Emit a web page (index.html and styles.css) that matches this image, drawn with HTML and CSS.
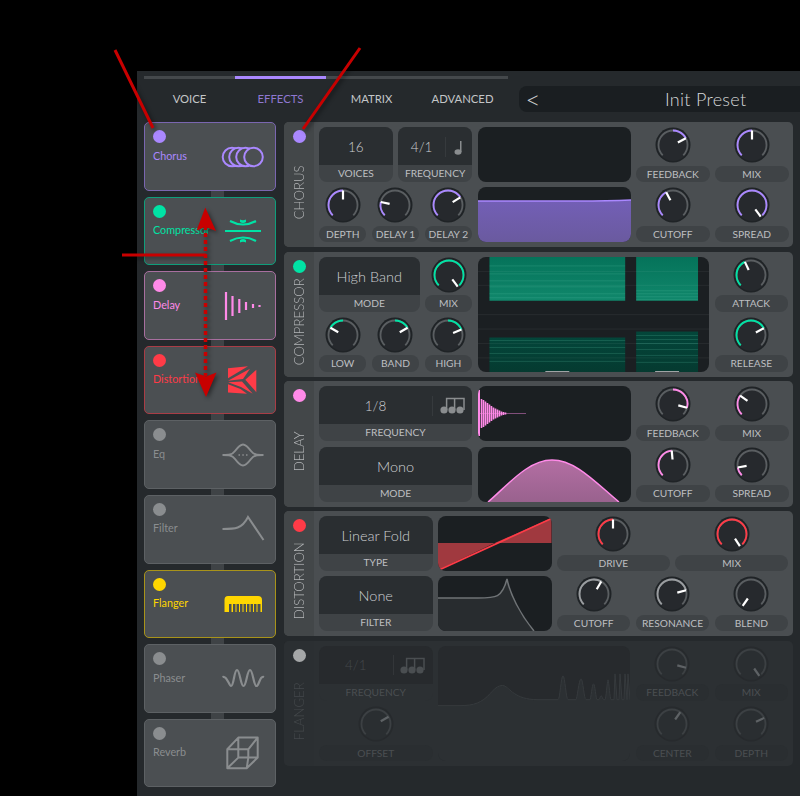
FILE: index.html
```html
<!DOCTYPE html>
<html>
<head>
  <title>Synth Effects</title>
  <link rel="stylesheet" href="styles.css">
</head>
<body>
  <svg class="defs">
    <symbol id="triplet" viewBox="0 0 26 17">
      <circle cx="4" cy="13" r="3.6"/>
      <circle cx="12" cy="13" r="3.6"/>
      <circle cx="20" cy="13" r="3.6"/>
      <path d="M6.6 13V1.5H24V13M14.6 13V1.5" fill="none" stroke="currentColor" stroke-width="1.5"/>
    </symbol>
  </svg>

  <div class="window">
    <div class="rail"><span class="rail-on"></span></div>
    <div class="header">
      <div class="tabs">
        <span class="tab">VOICE</span>
        <span class="tab tab-on">EFFECTS</span>
        <span class="tab">MATRIX</span>
        <span class="tab">ADVANCED</span>
      </div>
      <div class="preset">
        <span class="preset-prev">&lt;</span>
        <span class="preset-name">Init Preset</span>
      </div>
    </div>

    <div class="main">
      <div class="cards">
        <div class="card chorus">
          <span class="dot"></span>
          <div class="card-row">
            <span class="card-name">Chorus</span>
            <svg class="card-icon" viewBox="0 0 44 24" fill="#4b4f52" stroke="currentColor" stroke-width="2">
              <circle cx="11" cy="12" r="9.3"/><circle cx="17.5" cy="12" r="9.3"/><circle cx="24.5" cy="12" r="9.3"/><circle cx="32.5" cy="12" r="9.3"/>
            </svg>
          </div>
        </div>
        <i class="link"></i>
        <div class="card compressor">
          <span class="dot"></span>
          <div class="card-row">
            <span class="card-name">Compressor</span>
            <svg class="card-icon" viewBox="0 0 44 24" fill="none" stroke="currentColor" stroke-width="2">
              <path d="M4 12H40M9 2Q22 9 35 2M9 22Q22 15 35 22"/>
              <path d="M19 0.5Q22 2 25 0.5V3Q22 5 19 3ZM19 23.5Q22 22 25 23.5V21Q22 19 19 21Z" fill="currentColor" stroke="none"/>
            </svg>
          </div>
        </div>
        <i class="link"></i>
        <div class="card delay">
          <span class="dot"></span>
          <div class="card-row">
            <span class="card-name">Delay</span>
            <svg class="card-icon card-icon-tall" viewBox="0 0 44 30" fill="none" stroke="currentColor" stroke-width="2.2">
              <path d="M5 1V29M11.500 5V25M18.300 8V22M25 11V19M32 13V17M38.500 14V16"/>
            </svg>
          </div>
        </div>
        <i class="link"></i>
        <div class="card distortion">
          <span class="dot"></span>
          <div class="card-row">
            <span class="card-name">Distortion</span>
            <svg class="card-icon card-icon-tall" viewBox="0 0 44 30" fill="currentColor">
              <path d="M7 3.200L27 1.200L7 13.200Z"/>
              <path d="M7 15.800L29 3.800L22 14Z"/>
              <path d="M24.300 14.800L35.300 4.800V27.200Z"/>
              <path d="M7 17.200L21 16.500L31.700 28.800L20 22Z"/>
              <path d="M7 19.200L19.500 24L26 28.800L7 27.500Z"/>
            </svg>
          </div>
        </div>
        <i class="link"></i>
        <div class="card">
          <span class="dot"></span>
          <div class="card-row">
            <span class="card-name">Eq</span>
            <svg class="card-icon" viewBox="0 0 44 24" fill="none" stroke="currentColor" stroke-width="2">
              <path d="M1.500 12C8 12 11 12 14 8C17 4 19 1.500 22 1.500C25 1.500 27 4 30 8C33 12 36 12 42.500 12C36 12 33 12 30 16C27 20 25 22.500 22 22.500C19 22.500 17 20 14 16C11 12 8 12 1.500 12Z"/>
              <path d="M17.500 12H19M21.300 12H22.800M25 12H26.500" stroke-width="1.400"/>
            </svg>
          </div>
        </div>
        <i class="link"></i>
        <div class="card">
          <span class="dot"></span>
          <div class="card-row">
            <span class="card-name">Filter</span>
            <svg class="card-icon card-icon-tall" viewBox="0 0 44 30" fill="none" stroke="currentColor" stroke-width="2">
              <path d="M1.500 15C14 15 21 15 27 3L42.500 26"/>
            </svg>
          </div>
        </div>
        <i class="link"></i>
        <div class="card flanger">
          <span class="dot"></span>
          <div class="card-row">
            <span class="card-name">Flanger</span>
            <svg class="card-icon" viewBox="0 0 44 24" fill="currentColor">
              <path d="M7 4H37Q41 4 41 8V20H39.500V12H36.500V20H35.500V12H33V20H32V12H29.500V20H28.500V12H26V20H25V12H22.500V20H21.500V12H19V20H18V12H15.500V20H14.500V12H12V20H10.500V12H8V20H3.500V8Q3.500 4 7 4Z"/>
            </svg>
          </div>
        </div>
        <i class="link"></i>
        <div class="card">
          <span class="dot"></span>
          <div class="card-row">
            <span class="card-name">Phaser</span>
            <svg class="card-icon" viewBox="0 0 44 24" fill="none" stroke="currentColor" stroke-width="2.200">
              <path d="M1.500 10C6 8 8 19 10 19C13 19 13 3 16 3C19 3 19.500 19 22.500 19C25.500 19 26 3 29 3C32 3 32.500 19 35.500 19C38 19 39 8 43 10"/>
            </svg>
          </div>
        </div>
        <i class="link"></i>
        <div class="card">
          <span class="dot"></span>
          <div class="card-row">
            <span class="card-name">Reverb</span>
            <svg class="card-icon card-icon-cube" viewBox="0 0 44 36" fill="none" stroke="currentColor" stroke-width="2" stroke-linejoin="round">
              <path d="M17.300 2.600H36.700V22.600L25.700 33.300H6.300V14.300ZM17.300 14.300H27.300V22.600H17.300ZM17.300 2.600V14.300M6.300 14.300H17.300M36.700 2.600L27.300 14.300M36.700 22.600H27.300M25.700 33.300L27.300 22.600M6.300 33.300L17.300 22.600"/>
            </svg>
          </div>
        </div>
      </div>

      <div class="panels">
        <div class="panel chorus">
          <div class="panel-side"><span class="dot"></span><span class="panel-name">CHORUS</span></div>
          <div class="panel-body grid-chorus">
            <div class="row">
              <div class="select"><div class="select-value">16</div><div class="select-label">VOICES</div></div>
              <div class="select">
                <div class="select-value"><span class="select-text">4/1</span><span class="select-mode">
                  <svg class="note" viewBox="0 0 10 16"><ellipse cx="4" cy="13" rx="3.500" ry="2.800"/><rect x="6" y="2" width="1.500" height="11"/></svg>
                </span></div>
                <div class="select-label">FREQUENCY</div>
              </div>
            </div>
            <div class="scope"></div>
            <div class="ctl">
              <svg class="knob" viewBox="0 0 36 36"><circle class="knob-rim" cx="18" cy="18" r="17.500"/><circle class="knob-face" cx="18" cy="18" r="16"/><circle class="knob-track" cx="18" cy="18" r="14.500" pathLength="360" stroke-dasharray="270 90" transform="rotate(135 18 18)"/><circle class="knob-arc" cx="18" cy="18" r="14.500" pathLength="360" stroke-dasharray="0 135 62 1000" transform="rotate(135 18 18)"/><line class="knob-ptr" x1="18" y1="12.500" x2="18" y2="3.500" transform="rotate(62 18 18)"/></svg>
              <span class="pill">FEEDBACK</span>
            </div>
            <div class="ctl">
              <svg class="knob" viewBox="0 0 36 36"><circle class="knob-rim" cx="18" cy="18" r="17.500"/><circle class="knob-face" cx="18" cy="18" r="16"/><circle class="knob-track" cx="18" cy="18" r="14.500" pathLength="360" stroke-dasharray="270 90" transform="rotate(135 18 18)"/><circle class="knob-arc" cx="18" cy="18" r="14.500" pathLength="360" stroke-dasharray="135 1000" transform="rotate(135 18 18)"/><line class="knob-ptr" x1="18" y1="12.500" x2="18" y2="3.500"/></svg>
              <span class="pill">MIX</span>
            </div>
            <div class="row">
              <div class="ctl">
                <svg class="knob" viewBox="0 0 36 36"><circle class="knob-rim" cx="18" cy="18" r="17.500"/><circle class="knob-face" cx="18" cy="18" r="16"/><circle class="knob-track" cx="18" cy="18" r="14.500" pathLength="360" stroke-dasharray="270 90" transform="rotate(135 18 18)"/><circle class="knob-arc" cx="18" cy="18" r="14.500" pathLength="360" stroke-dasharray="135 1000" transform="rotate(135 18 18)"/><line class="knob-ptr" x1="18" y1="12.500" x2="18" y2="3.500"/></svg>
                <span class="pill">DEPTH</span>
              </div>
              <div class="ctl">
                <svg class="knob" viewBox="0 0 36 36"><circle class="knob-rim" cx="18" cy="18" r="17.500"/><circle class="knob-face" cx="18" cy="18" r="16"/><circle class="knob-track" cx="18" cy="18" r="14.500" pathLength="360" stroke-dasharray="270 90" transform="rotate(135 18 18)"/><circle class="knob-arc" cx="18" cy="18" r="14.500" pathLength="360" stroke-dasharray="57 1000" transform="rotate(135 18 18)"/><line class="knob-ptr" x1="18" y1="12.500" x2="18" y2="3.500" transform="rotate(-78 18 18)"/></svg>
                <span class="pill">DELAY 1</span>
              </div>
              <div class="ctl">
                <svg class="knob" viewBox="0 0 36 36"><circle class="knob-rim" cx="18" cy="18" r="17.500"/><circle class="knob-face" cx="18" cy="18" r="16"/><circle class="knob-track" cx="18" cy="18" r="14.500" pathLength="360" stroke-dasharray="270 90" transform="rotate(135 18 18)"/><circle class="knob-arc" cx="18" cy="18" r="14.500" pathLength="360" stroke-dasharray="193 1000" transform="rotate(135 18 18)"/><line class="knob-ptr" x1="18" y1="12.500" x2="18" y2="3.500" transform="rotate(58 18 18)"/></svg>
                <span class="pill">DELAY 2</span>
              </div>
            </div>
            <div class="scope">
              <svg class="scope-svg" viewBox="0 0 153 55" preserveAspectRatio="none">
                <defs><linearGradient id="chorusFill" x1="0" y1="0" x2="0" y2="1"><stop offset="0" stop-color="#735fb6"/><stop offset="1" stop-color="#6a5a9f"/></linearGradient></defs>
                <path d="M0 14H100Q130 14 153 13V55H0Z" fill="url(#chorusFill)"/>
                <path d="M0 14H100Q130 14 153 13" fill="none" stroke="#aa88ff" stroke-width="1.600"/>
              </svg>
            </div>
            <div class="ctl">
              <svg class="knob" viewBox="0 0 36 36"><circle class="knob-rim" cx="18" cy="18" r="17.500"/><circle class="knob-face" cx="18" cy="18" r="16"/><circle class="knob-track" cx="18" cy="18" r="14.500" pathLength="360" stroke-dasharray="270 90" transform="rotate(135 18 18)"/><circle class="knob-arc" cx="18" cy="18" r="14.500" pathLength="360" stroke-dasharray="107 1000" transform="rotate(135 18 18)"/><line class="knob-ptr" x1="18" y1="12.500" x2="18" y2="3.500" transform="rotate(-28 18 18)"/></svg>
              <span class="pill">CUTOFF</span>
            </div>
            <div class="ctl">
              <svg class="knob" viewBox="0 0 36 36"><circle class="knob-rim" cx="18" cy="18" r="17.500"/><circle class="knob-face" cx="18" cy="18" r="16"/><circle class="knob-track" cx="18" cy="18" r="14.500" pathLength="360" stroke-dasharray="270 90" transform="rotate(135 18 18)"/><circle class="knob-arc" cx="18" cy="18" r="14.500" pathLength="360" stroke-dasharray="270 1000" transform="rotate(135 18 18)"/><line class="knob-ptr" x1="18" y1="12.500" x2="18" y2="3.500" transform="rotate(143 18 18)"/></svg>
              <span class="pill">SPREAD</span>
            </div>
          </div>
        </div>

        <div class="panel compressor">
          <div class="panel-side"><span class="dot"></span><span class="panel-name">COMPRESSOR</span></div>
          <div class="panel-body grid-compressor">
            <div class="row">
              <div class="select select-wide"><div class="select-value select-big">High Band</div><div class="select-label">MODE</div></div>
              <div class="ctl ctl-narrow">
                <svg class="knob" viewBox="0 0 36 36"><circle class="knob-rim" cx="18" cy="18" r="17.500"/><circle class="knob-face" cx="18" cy="18" r="16"/><circle class="knob-track" cx="18" cy="18" r="14.500" pathLength="360" stroke-dasharray="270 90" transform="rotate(135 18 18)"/><circle class="knob-arc" cx="18" cy="18" r="14.500" pathLength="360" stroke-dasharray="270 1000" transform="rotate(135 18 18)"/><line class="knob-ptr" x1="18" y1="12.500" x2="18" y2="3.500" transform="rotate(143 18 18)"/></svg>
                <span class="pill">MIX</span>
              </div>
            </div>
            <div class="scope scope-tall">
              <svg class="scope-svg" viewBox="0 0 232 116" preserveAspectRatio="none">
                <defs>
                  <linearGradient id="compTop" x1="0" y1="0" x2="0" y2="1"><stop offset="0" stop-color="#05735a"/><stop offset="1" stop-color="#10876b"/></linearGradient>
                  <linearGradient id="compLow" x1="0" y1="0" x2="0" y2="1"><stop offset="0" stop-color="#03463a"/><stop offset="1" stop-color="#053a30"/></linearGradient>
                </defs>
                <rect x="11.500" width="136" height="44" fill="url(#compTop)"/>
                <rect x="158.500" width="62" height="44" fill="url(#compTop)"/>
                <rect x="11.500" y="81" width="136" height="35" fill="url(#compLow)"/>
                <rect x="158.500" y="75" width="62" height="41" fill="url(#compLow)"/>
                <path d="M0 14.500H232M0 28.500H232M0 58H232M0 72.500H232M0 87H232M0 101.500H232" stroke="#fff" stroke-opacity=".06"/>
                <path d="M11.500 9H147.500M11.500 17H147.500M11.500 24H147.500M11.500 30H147.500M11.500 37H147.500M11.500 41H147.500M158.500 34H220.500M158.500 37H220.500M158.500 40H220.500M158.500 43H220.500" stroke="#5fc3a9" stroke-opacity=".22"/>
                <path d="M11.500 84H147.500M11.500 91H147.500M11.500 97H147.500M11.500 105H147.500M158.500 79H220.500M158.500 83H220.500M158.500 87H220.500M158.500 93H220.500M158.500 99H220.500M158.500 106H220.500" stroke="#5fc3a9" stroke-opacity=".22"/>
                <path d="M67.500 115.500H91.500M177.500 115.500H201.500" stroke="#9fa3a5" stroke-width="1.500"/>
              </svg>
            </div>
            <div class="ctl">
              <svg class="knob" viewBox="0 0 36 36"><circle class="knob-rim" cx="18" cy="18" r="17.500"/><circle class="knob-face" cx="18" cy="18" r="16"/><circle class="knob-track" cx="18" cy="18" r="14.500" pathLength="360" stroke-dasharray="270 90" transform="rotate(135 18 18)"/><circle class="knob-arc" cx="18" cy="18" r="14.500" pathLength="360" stroke-dasharray="110 1000" transform="rotate(135 18 18)"/><line class="knob-ptr" x1="18" y1="12.500" x2="18" y2="3.500" transform="rotate(-25 18 18)"/></svg>
              <span class="pill">ATTACK</span>
            </div>
            <div class="row">
              <div class="ctl">
                <svg class="knob" viewBox="0 0 36 36"><circle class="knob-rim" cx="18" cy="18" r="17.500"/><circle class="knob-face" cx="18" cy="18" r="16"/><circle class="knob-track" cx="18" cy="18" r="14.500" pathLength="360" stroke-dasharray="270 90" transform="rotate(135 18 18)"/><circle class="knob-arc" cx="18" cy="18" r="14.500" pathLength="360" stroke-dasharray="0 75 60 1000" transform="rotate(135 18 18)"/><line class="knob-ptr" x1="18" y1="12.500" x2="18" y2="3.500" transform="rotate(-60 18 18)"/></svg>
                <span class="pill">LOW</span>
              </div>
              <div class="ctl">
                <svg class="knob" viewBox="0 0 36 36"><circle class="knob-rim" cx="18" cy="18" r="17.500"/><circle class="knob-face" cx="18" cy="18" r="16"/><circle class="knob-track" cx="18" cy="18" r="14.500" pathLength="360" stroke-dasharray="270 90" transform="rotate(135 18 18)"/><circle class="knob-arc" cx="18" cy="18" r="14.500" pathLength="360" stroke-dasharray="0 135 60 1000" transform="rotate(135 18 18)"/><line class="knob-ptr" x1="18" y1="12.500" x2="18" y2="3.500" transform="rotate(60 18 18)"/></svg>
                <span class="pill">BAND</span>
              </div>
              <div class="ctl">
                <svg class="knob" viewBox="0 0 36 36"><circle class="knob-rim" cx="18" cy="18" r="17.500"/><circle class="knob-face" cx="18" cy="18" r="16"/><circle class="knob-track" cx="18" cy="18" r="14.500" pathLength="360" stroke-dasharray="270 90" transform="rotate(135 18 18)"/><circle class="knob-arc" cx="18" cy="18" r="14.500" pathLength="360" stroke-dasharray="0 135 68 1000" transform="rotate(135 18 18)"/><line class="knob-ptr" x1="18" y1="12.500" x2="18" y2="3.500" transform="rotate(68 18 18)"/></svg>
                <span class="pill">HIGH</span>
              </div>
            </div>
            <div class="ctl">
              <svg class="knob" viewBox="0 0 36 36"><circle class="knob-rim" cx="18" cy="18" r="17.500"/><circle class="knob-face" cx="18" cy="18" r="16"/><circle class="knob-track" cx="18" cy="18" r="14.500" pathLength="360" stroke-dasharray="270 90" transform="rotate(135 18 18)"/><circle class="knob-arc" cx="18" cy="18" r="14.500" pathLength="360" stroke-dasharray="197 1000" transform="rotate(135 18 18)"/><line class="knob-ptr" x1="18" y1="12.500" x2="18" y2="3.500" transform="rotate(62 18 18)"/></svg>
              <span class="pill">RELEASE</span>
            </div>
          </div>
        </div>

        <div class="panel delay">
          <div class="panel-side"><span class="dot"></span><span class="panel-name">DELAY</span></div>
          <div class="panel-body grid-chorus">
            <div class="select select-full">
              <div class="select-value"><span class="select-text">1/8</span><span class="select-mode select-mode-wide">
                <svg class="triplet"><use href="#triplet"/></svg>
              </span></div>
              <div class="select-label">FREQUENCY</div>
            </div>
            <div class="scope">
              <svg class="scope-svg" viewBox="0 0 153 55" preserveAspectRatio="none">
                <path d="M0.500 27.500H48" stroke="#ff8ae8" stroke-opacity=".45"/>
                <path d="M1 4V50" stroke="#ff8ae8" stroke-width="2"/>
                <path d="M3.500 13V42M5.500 14V41M7.500 15.500V39.500M9.500 17V38M11.500 18.500V36.500M13.500 20V35M15.500 21.500V33.500M17.500 22.500V32.500M19.500 23.500V31.500M21.500 24.500V30.500M23.500 25.500V29.500M25.500 26V29M27.500 26.500V28.500" stroke="#ff8ae8" stroke-width="1.600"/>
              </svg>
            </div>
            <div class="ctl">
              <svg class="knob" viewBox="0 0 36 36"><circle class="knob-rim" cx="18" cy="18" r="17.500"/><circle class="knob-face" cx="18" cy="18" r="16"/><circle class="knob-track" cx="18" cy="18" r="14.500" pathLength="360" stroke-dasharray="270 90" transform="rotate(135 18 18)"/><circle class="knob-arc" cx="18" cy="18" r="14.500" pathLength="360" stroke-dasharray="0 135 105 1000" transform="rotate(135 18 18)"/><line class="knob-ptr" x1="18" y1="12.500" x2="18" y2="3.500" transform="rotate(105 18 18)"/></svg>
              <span class="pill">FEEDBACK</span>
            </div>
            <div class="ctl">
              <svg class="knob" viewBox="0 0 36 36"><circle class="knob-rim" cx="18" cy="18" r="17.500"/><circle class="knob-face" cx="18" cy="18" r="16"/><circle class="knob-track" cx="18" cy="18" r="14.500" pathLength="360" stroke-dasharray="270 90" transform="rotate(135 18 18)"/><circle class="knob-arc" cx="18" cy="18" r="14.500" pathLength="360" stroke-dasharray="80 1000" transform="rotate(135 18 18)"/><line class="knob-ptr" x1="18" y1="12.500" x2="18" y2="3.500" transform="rotate(-55 18 18)"/></svg>
              <span class="pill">MIX</span>
            </div>
            <div class="select select-full"><div class="select-value select-big">Mono</div><div class="select-label">MODE</div></div>
            <div class="scope">
              <svg class="scope-svg" viewBox="0 0 153 55" preserveAspectRatio="none">
                <defs><linearGradient id="delayFill" x1="0" y1="0" x2="0" y2="1"><stop offset="0" stop-color="#b36ea3"/><stop offset="1" stop-color="#99628e"/></linearGradient></defs>
                <path d="M10 55C30 38 50 13 74 13C98 13 118 36 141 55Z" fill="url(#delayFill)"/>
                <path d="M10 55C30 38 50 13 74 13C98 13 118 36 141 55" fill="none" stroke="#ff8ae8" stroke-width="1.500"/>
              </svg>
            </div>
            <div class="ctl">
              <svg class="knob" viewBox="0 0 36 36"><circle class="knob-rim" cx="18" cy="18" r="17.500"/><circle class="knob-face" cx="18" cy="18" r="16"/><circle class="knob-track" cx="18" cy="18" r="14.500" pathLength="360" stroke-dasharray="270 90" transform="rotate(135 18 18)"/><circle class="knob-arc" cx="18" cy="18" r="14.500" pathLength="360" stroke-dasharray="130 1000" transform="rotate(135 18 18)"/><line class="knob-ptr" x1="18" y1="12.500" x2="18" y2="3.500" transform="rotate(-5 18 18)"/></svg>
              <span class="pill">CUTOFF</span>
            </div>
            <div class="ctl">
              <svg class="knob" viewBox="0 0 36 36"><circle class="knob-rim" cx="18" cy="18" r="17.500"/><circle class="knob-face" cx="18" cy="18" r="16"/><circle class="knob-track" cx="18" cy="18" r="14.500" pathLength="360" stroke-dasharray="270 90" transform="rotate(135 18 18)"/><circle class="knob-arc" cx="18" cy="18" r="14.500" pathLength="360" stroke-dasharray="35 1000" transform="rotate(135 18 18)"/><line class="knob-ptr" x1="18" y1="12.500" x2="18" y2="3.500" transform="rotate(-100 18 18)"/></svg>
              <span class="pill">SPREAD</span>
            </div>
          </div>
        </div>

        <div class="panel distortion">
          <div class="panel-side"><span class="dot"></span><span class="panel-name">DISTORTION</span></div>
          <div class="panel-body grid-distortion">
            <div class="select select-full"><div class="select-value select-big">Linear Fold</div><div class="select-label">TYPE</div></div>
            <div class="scope">
              <svg class="scope-svg" viewBox="0 0 113.500 55" preserveAspectRatio="none">
                <path d="M0 27H56.700L0 54ZM56.700 27L113.500 2V27Z" fill="#a0393f"/>
                <path d="M1 54L113.500 2.500" fill="none" stroke="#ff3b47" stroke-width="1.600"/>
              </svg>
            </div>
            <div class="row row-knobs">
              <div class="ctl">
                <svg class="knob" viewBox="0 0 36 36"><circle class="knob-rim" cx="18" cy="18" r="17.500"/><circle class="knob-face" cx="18" cy="18" r="16"/><circle class="knob-track" cx="18" cy="18" r="14.500" pathLength="360" stroke-dasharray="270 90" transform="rotate(135 18 18)"/><circle class="knob-arc" cx="18" cy="18" r="14.500" pathLength="360" stroke-dasharray="135 1000" transform="rotate(135 18 18)"/><line class="knob-ptr" x1="18" y1="12.500" x2="18" y2="3.500"/></svg>
                <span class="pill">DRIVE</span>
              </div>
              <div class="ctl">
                <svg class="knob" viewBox="0 0 36 36"><circle class="knob-rim" cx="18" cy="18" r="17.500"/><circle class="knob-face" cx="18" cy="18" r="16"/><circle class="knob-track" cx="18" cy="18" r="14.500" pathLength="360" stroke-dasharray="270 90" transform="rotate(135 18 18)"/><circle class="knob-arc" cx="18" cy="18" r="14.500" pathLength="360" stroke-dasharray="270 1000" transform="rotate(135 18 18)"/><line class="knob-ptr" x1="18" y1="12.500" x2="18" y2="3.500" transform="rotate(147 18 18)"/></svg>
                <span class="pill">MIX</span>
              </div>
            </div>
            <div class="select select-full"><div class="select-value select-big">None</div><div class="select-label">FILTER</div></div>
            <div class="scope">
              <svg class="scope-svg" viewBox="0 0 113.500 55" preserveAspectRatio="none">
                <path d="M0 22H40C58 22 64 22 69 3C72 18 82 38 96 55H0Z" fill="#282c2f"/>
                <path d="M0 22H40C58 22 64 22 69 3C72 18 82 38 96 55" fill="none" stroke="#6f7376" stroke-width="1.500"/>
              </svg>
            </div>
            <div class="row row-knobs">
              <div class="ctl ctl-grey">
                <svg class="knob" viewBox="0 0 36 36"><circle class="knob-rim" cx="18" cy="18" r="17.500"/><circle class="knob-face" cx="18" cy="18" r="16"/><circle class="knob-track" cx="18" cy="18" r="14.500" pathLength="360" stroke-dasharray="270 90" transform="rotate(135 18 18)"/><circle class="knob-arc" cx="18" cy="18" r="14.500" pathLength="360" stroke-dasharray="165 1000" transform="rotate(135 18 18)"/><line class="knob-ptr" x1="18" y1="12.500" x2="18" y2="3.500" transform="rotate(30 18 18)"/></svg>
                <span class="pill">CUTOFF</span>
              </div>
              <div class="ctl ctl-grey">
                <svg class="knob" viewBox="0 0 36 36"><circle class="knob-rim" cx="18" cy="18" r="17.500"/><circle class="knob-face" cx="18" cy="18" r="16"/><circle class="knob-track" cx="18" cy="18" r="14.500" pathLength="360" stroke-dasharray="270 90" transform="rotate(135 18 18)"/><circle class="knob-arc" cx="18" cy="18" r="14.500" pathLength="360" stroke-dasharray="210 1000" transform="rotate(135 18 18)"/><line class="knob-ptr" x1="18" y1="12.500" x2="18" y2="3.500" transform="rotate(75 18 18)"/></svg>
                <span class="pill">RESONANCE</span>
              </div>
              <div class="ctl ctl-grey">
                <svg class="knob" viewBox="0 0 36 36"><circle class="knob-rim" cx="18" cy="18" r="17.500"/><circle class="knob-face" cx="18" cy="18" r="16"/><circle class="knob-track" cx="18" cy="18" r="14.500" pathLength="360" stroke-dasharray="270 90" transform="rotate(135 18 18)"/><line class="knob-ptr" x1="18" y1="12.500" x2="18" y2="3.500" transform="rotate(-145 18 18)"/></svg>
                <span class="pill">BLEND</span>
              </div>
            </div>
          </div>
        </div>

        <div class="panel panel-off">
          <div class="panel-side"><span class="dot"></span><span class="panel-name">FLANGER</span></div>
          <div class="panel-body grid-flanger">
            <div class="select select-full">
              <div class="select-value"><span class="select-text">4/1</span><span class="select-mode select-mode-wide">
                <svg class="triplet"><use href="#triplet"/></svg>
              </span></div>
              <div class="select-label">FREQUENCY</div>
            </div>
            <div class="scope scope-tall">
              <svg class="scope-svg" viewBox="0 0 192 116" preserveAspectRatio="none">
                <path d="M0 60H22C36 60 44 57 52 48C58 41 62 39 66 40C72 42 76 54 100 54H120C122 54 123 30 125 30C127 30 128 54 130 54H138C139 54 141 33 143 33C145 33 146 54 148 54H152C153 54 154 38 155.500 38C157 38 158 54 159 54H161C162 54 162 50 163 50C164 50 165 54 165.500 54H167C168 54 169 36 170 34C171 36 172 54 173 54H176L177 28L179 54H181L182 28L184 54H186L187 28L189 54L190 28L192 54V116H0Z" fill="#2c3033"/>
                <path d="M0 60H22C36 60 44 57 52 48C58 41 62 39 66 40C72 42 76 54 100 54H120C122 54 123 30 125 30C127 30 128 54 130 54H138C139 54 141 33 143 33C145 33 146 54 148 54H152C153 54 154 38 155.500 38C157 38 158 54 159 54H161C162 54 162 50 163 50C164 50 165 54 165.500 54H167C168 54 169 36 170 34C171 36 172 54 173 54H176L177 28L179 54H181L182 28L184 54H186L187 28L189 54L190 28L192 54" fill="none" stroke="#363a3d"/>
              </svg>
            </div>
            <div class="ctl">
              <svg class="knob" viewBox="0 0 36 36"><circle class="knob-rim" cx="18" cy="18" r="17.500"/><circle class="knob-face" cx="18" cy="18" r="16"/><circle class="knob-track" cx="18" cy="18" r="14.500" pathLength="360" stroke-dasharray="270 90" transform="rotate(135 18 18)"/><line class="knob-ptr" x1="18" y1="12.500" x2="18" y2="3.500" transform="rotate(105 18 18)"/></svg>
              <span class="pill">FEEDBACK</span>
            </div>
            <div class="ctl">
              <svg class="knob" viewBox="0 0 36 36"><circle class="knob-rim" cx="18" cy="18" r="17.500"/><circle class="knob-face" cx="18" cy="18" r="16"/><circle class="knob-track" cx="18" cy="18" r="14.500" pathLength="360" stroke-dasharray="270 90" transform="rotate(135 18 18)"/><line class="knob-ptr" x1="18" y1="12.500" x2="18" y2="3.500" transform="rotate(145 18 18)"/></svg>
              <span class="pill">MIX</span>
            </div>
            <div class="ctl">
              <svg class="knob" viewBox="0 0 36 36"><circle class="knob-rim" cx="18" cy="18" r="17.500"/><circle class="knob-face" cx="18" cy="18" r="16"/><circle class="knob-track" cx="18" cy="18" r="14.500" pathLength="360" stroke-dasharray="270 90" transform="rotate(135 18 18)"/><line class="knob-ptr" x1="18" y1="12.500" x2="18" y2="3.500" transform="rotate(60 18 18)"/></svg>
              <span class="pill">OFFSET</span>
            </div>
            <div class="ctl">
              <svg class="knob" viewBox="0 0 36 36"><circle class="knob-rim" cx="18" cy="18" r="17.500"/><circle class="knob-face" cx="18" cy="18" r="16"/><circle class="knob-track" cx="18" cy="18" r="14.500" pathLength="360" stroke-dasharray="270 90" transform="rotate(135 18 18)"/><line class="knob-ptr" x1="18" y1="12.500" x2="18" y2="3.500" transform="rotate(35 18 18)"/></svg>
              <span class="pill">CENTER</span>
            </div>
            <div class="ctl">
              <svg class="knob" viewBox="0 0 36 36"><circle class="knob-rim" cx="18" cy="18" r="17.500"/><circle class="knob-face" cx="18" cy="18" r="16"/><circle class="knob-track" cx="18" cy="18" r="14.500" pathLength="360" stroke-dasharray="270 90" transform="rotate(135 18 18)"/><line class="knob-ptr" x1="18" y1="12.500" x2="18" y2="3.500" transform="rotate(65 18 18)"/></svg>
              <span class="pill">DEPTH</span>
            </div>
          </div>
        </div>
      </div>
    </div>
  </div>

  <!-- red annotation marks drawn over the screenshot -->
  <svg class="marks" viewBox="0 0 800 796">
    <path d="M115 50L153 128M360 48L303 129M122 255H206" fill="none" stroke="#c80000" stroke-width="3"/>
    <path d="M205.500 226V376" fill="none" stroke="#c80000" stroke-width="3.500" stroke-dasharray="4 3"/>
    <path d="M205.300 207.500L196.500 230.500L205.300 227L216 231Z" fill="#c80000"/>
    <path d="M206 397L195 372.500L206 376.500L216.500 372.500Z" fill="#c80000"/>
  </svg>
</body>
</html>
```

FILE: styles.css
```css
html, body {
  margin: 0;
  height: 796px;
  overflow: hidden;
  background-color: #000;
}
body {
  font-family: "Lato", "Open Sans", sans-serif;
  position: relative;
}
.defs {
  display: none;
}

/* window */
.window {
  margin: 71px 0 0 137px;
  width: 663px;
  height: 725px;
  padding-top: 5px;
  box-sizing: border-box;
  background-color: #25292c;
  overflow: hidden;
}
.rail {
  width: 364px;
  height: 3px;
  margin-left: 7px;
  background-color: #44484b;
}
.rail-on {
  display: block;
  width: 91px;
  height: 3px;
  margin-left: 91px;
  background-color: #aa88ff;
}
.header {
  display: flex;
  margin: 7px 0 10px 7px;
  height: 26px;
}
.tabs {
  display: flex;
  width: 364px;
}
.tab {
  flex: 1;
  text-align: center;
  line-height: 26px;
  font-size: 11.3px;
  color: #c4c6c8;
}
.tab-on {
  color: #8f78d2;
}
.preset {
  display: flex;
  align-items: center;
  flex: 1;
  margin-left: 11px;
  background-color: #1a1e21;
  border-radius: 8px 0 0 8px;
}
.preset-prev {
  width: 28px;
  text-align: center;
  font-size: 26px;
  line-height: 26px;
  font-weight: 300;
  color: #c9cbcc;
}
.preset-name {
  flex: 1;
  padding-left: 118px;
  box-sizing: border-box;
  font-size: 18px;
  font-weight: 300;
  letter-spacing: .3px;
  color: #d6d8d9;
}

.main {
  display: flex;
  gap: 8px;
  padding-left: 7px;
}

/* effect cards */
.chorus { --accent: #aa88ff; --edge: #7a66b0; }
.compressor { --accent: #00e3a5; --edge: #0f9e7b; }
.delay { --accent: #ff8ae8; --edge: #a86f9f; }
.distortion { --accent: #ff3b47; --edge: #a93d46; }
.flanger { --accent: #ffd600; --edge: #a8931a; }

.cards {
  display: flex;
  flex-direction: column;
  width: 132px;
  --accent: #8a8d8f;
  --edge: #5d6164;
}
.card {
  height: 68.6px;
  box-sizing: border-box;
  padding: 7px 8px 0;
  background-color: #4b4f52;
  border: 1px solid var(--edge);
  border-radius: 5px;
  color: var(--accent);
}
.dot {
  display: block;
  width: 13px;
  height: 13px;
  border-radius: 50%;
  background-color: var(--accent);
}
.card-row {
  display: flex;
  align-items: center;
  justify-content: space-between;
  height: 24px;
}
.card-name {
  font-size: 10.8px;
}
.card-icon {
  width: 44px;
  height: 24px;
  margin: 3px 2px 0 0;
  flex-shrink: 0;
  overflow: visible;
}
.card-icon-tall {
  height: 30px;
}
.card-icon-cube {
  height: 36px;
}
.link {
  display: block;
  flex-shrink: 0;
  width: 13px;
  height: 6px;
  margin-left: 67px;
  background-color: #3f4346;
}

/* panels */
.panels {
  display: flex;
  flex-direction: column;
  gap: 4.4px;
  width: 509px;
}
.panel {
  display: flex;
  height: 125.3px;
  background-color: #4a4e51;
  border-radius: 5px;
  overflow: hidden;
  --ink: #bdbfc1;
  --pill: #3f4346;
  --box: #3f4346;
  --value: #2a2e31;
  --value-ink: #cdcfd1;
  --scope: #1b1f22;
  --rim: #1f2326;
  --face: #26292d;
  --track: #5a5e61;
  --ptr: #fff;
}
.panel-off {
  background-color: #2c3033;
  --accent: #a5a7a8;
  --ink: #4a4e51;
  --pill: #2a2e31;
  --box: #2c3033;
  --value: #272a2d;
  --value-ink: #44484b;
  --scope: #272a2d;
  --rim: #272a2d;
  --face: #2a2e31;
  --track: #3c4043;
  --ptr: #5e6265;
}
.panel-side {
  display: flex;
  flex-direction: column;
  align-items: center;
  flex-shrink: 0;
  width: 30px;
  padding: 8px 0 6px;
  box-sizing: border-box;
  background-color: #434749;
}
.panel-off .panel-side {
  background-color: #2b2f32;
}
.panel-name {
  flex: 1;
  display: flex;
  align-items: center;
  justify-content: center;
  writing-mode: vertical-rl;
  transform: rotate(180deg);
  font-size: 13.2px;
  font-weight: 300;
  color: #b4b6b8;
}
.panel-off .panel-name {
  color: #44484b;
}
.panel-body {
  display: grid;
  flex: 1;
  padding: 5px;
  box-sizing: border-box;
  column-gap: 5.5px;
  row-gap: 5.3px;
  grid-template-rows: 55px 55px;
}
.grid-chorus {
  grid-template-columns: 153px 153px 73.5px 73.5px;
}
.grid-compressor {
  grid-template-columns: 153px 231.5px 73.5px;
}
.grid-distortion {
  grid-template-columns: 113.5px 113.5px 1fr;
}
.grid-flanger {
  grid-template-columns: 113.5px 192px 73.5px 73.5px;
}
.scope-tall {
  grid-row: span 2;
}
.row {
  display: flex;
  gap: 5.500px;
  min-width: 0;
}
.row .ctl {
  flex: 1;
  min-width: 0;
}

/* select boxes */
.select {
  display: flex;
  flex-direction: column;
  flex: 1;
  background-color: var(--box);
  border-radius: 8px;
  overflow: hidden;
}
.select-wide {
  flex: none;
  width: 100.500px;
}
.select-value {
  display: flex;
  align-items: center;
  justify-content: center;
  height: 38px;
  padding-top: 1px;
  box-sizing: border-box;
  flex-shrink: 0;
  background-color: var(--value);
  font-size: 13.500px;
  font-weight: 300;
  color: var(--value-ink);
}
.select-big {
  font-size: 14.500px;
}
.select-text {
  flex: 1;
  text-align: center;
}
.select-mode {
  display: flex;
  align-items: center;
  justify-content: center;
  width: 26px;
  height: 20px;
  border-left: 1px solid rgba(255, 255, 255, .06);
  color: #8a8d8f;
}
.panel-off .select-mode {
  color: #4a4e51;
}
.select-mode-wide {
  width: 39px;
}
.note {
  width: 10px;
  height: 16px;
  fill: currentColor;
}
.triplet {
  width: 26px;
  height: 17px;
  fill: currentColor;
}
.select-label {
  flex: 1;
  text-align: center;
  line-height: 17px;
  font-size: 10.2px;
  color: var(--ink);
}

/* scopes */
.scope {
  background-color: var(--scope);
  border-radius: 8px;
  overflow: hidden;
}
.scope-svg {
  display: block;
  width: 100%;
  height: 100%;
}

/* knobs */
.ctl {
  display: flex;
  flex-direction: column;
  align-items: center;
  justify-content: space-between;
}
.knob {
  display: block;
  width: 36px;
  height: 36px;
  flex-shrink: 0;
}
.knob-rim { fill: var(--rim); }
.knob-face { fill: var(--face); }
.knob-track {
  fill: none;
  stroke: var(--track);
  stroke-width: 1.800;
}
.knob-arc {
  fill: none;
  stroke: var(--accent);
  stroke-width: 1.800;
}
.ctl-grey .knob-arc {
  stroke: #9a9da0;
}
.knob-ptr {
  stroke: var(--ptr);
  stroke-width: 2.200;
}
.pill {
  display: block;
  align-self: stretch;
  height: 16.500px;
  line-height: 16.500px;
  text-align: center;
  font-size: 10.2px;
  white-space: nowrap;
  background-color: var(--pill);
  border-radius: 8px;
  color: var(--ink);
}

/* annotation overlay */
.marks {
  position: absolute;
  left: 0;
  top: 0;
  width: 800px;
  height: 796px;
  filter: drop-shadow(2px 2px 2px rgba(0, 0, 0, .45));
  pointer-events: none;
}
```
